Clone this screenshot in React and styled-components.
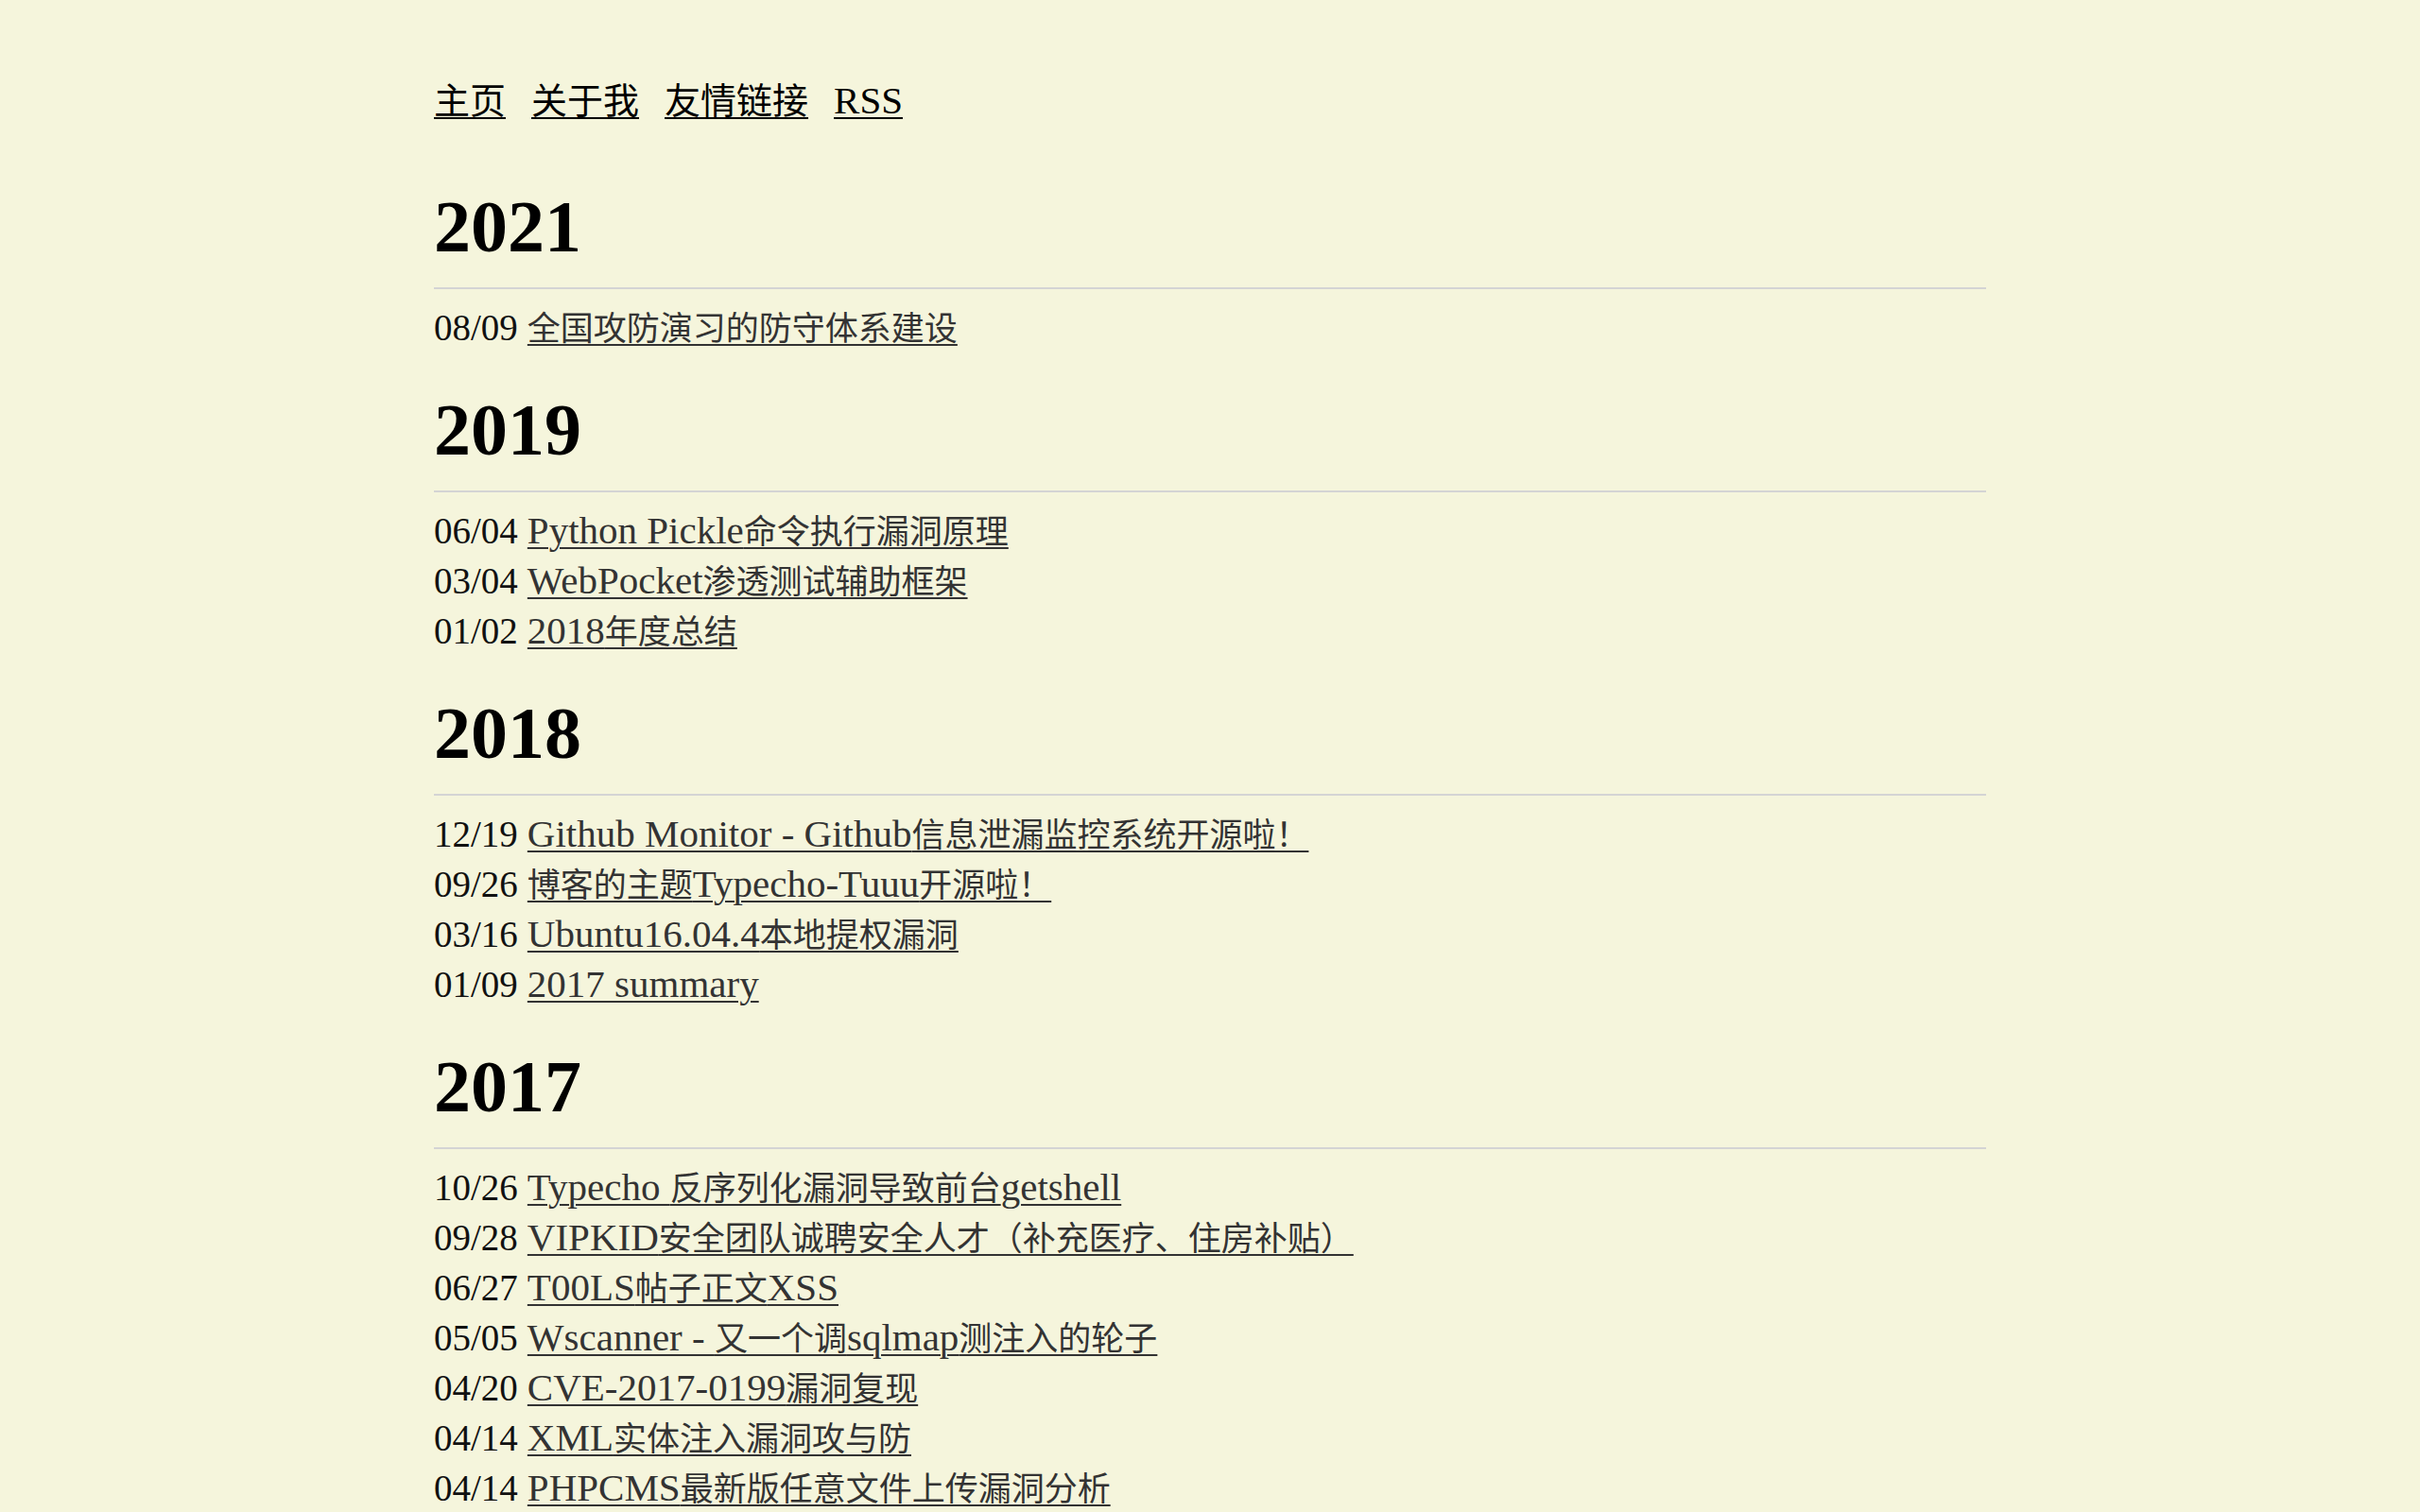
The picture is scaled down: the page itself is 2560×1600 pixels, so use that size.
import React from "react";
import styled, { createGlobalStyle } from "styled-components";

const GlobalStyle = createGlobalStyle`
  html, body {
    margin: 0;
    padding: 0;
    background: #f5f5dc;
  }
  body {
    font-family: "Liberation Serif", "Noto Sans CJK SC", serif;
    color: #111;
  }
`;

const Page = styled.div`
  width: 1642px;
  margin: 0 auto;
  padding-top: 81px;
  padding-bottom: 60px;
`;

const Nav = styled.nav`
  display: flex;
  gap: 27px;
  height: 50px;
  align-items: center;
  font-size: 41px;
`;

const NavLink = styled.a`
  color: #000;
  text-decoration: underline;
  text-underline-offset: 4px;
  text-decoration-thickness: 2px;
`;

const Archive = styled.main`
  display: flex;
  flex-direction: column;
  gap: 42px;
  margin-top: 69px;
`;

const Year = styled.h2`
  margin: 0;
  font-size: 78px;
  font-weight: 700;
  line-height: 80px;
  color: #000;
  padding-bottom: 24px;
  border-bottom: 2px solid #d4d4d4;
`;

const List = styled.ul`
  list-style: none;
  margin: 14px 0 0;
  padding: 0;
`;

const Item = styled.li`
  font-size: 41px;
  line-height: 53px;
  color: #111;
`;

const Date = styled.span`
  font-size: 39px;
  margin-right: 10px;
`;

const Link = styled.a`
  color: #333;
  text-decoration: underline;
  text-underline-offset: 4px;
  text-decoration-thickness: 2px;
`;

// CJK runs are set a little smaller than the Latin ones
const Han = styled.span`
  font-size: ${(p) => p.$size}px;
  line-height: 1;
`;

const HAN_RUN = /([\u2e80-\u9fff\u3000-\u303f\uff00-\uffef]+)/;

const Title = ({ text, size = 35 }) =>
  text.split(HAN_RUN).map((part, i) =>
    i % 2 === 1 ? (
      <Han key={i} $size={size}>
        {part}
      </Han>
    ) : (
      part
    )
  );

const navItems = ["主页", "关于我", "友情链接", "RSS"];

const archive = [
  {
    year: "2021",
    posts: [["08/09", "全国攻防演习的防守体系建设"]],
  },
  {
    year: "2019",
    posts: [
      ["06/04", "Python Pickle命令执行漏洞原理"],
      ["03/04", "WebPocket渗透测试辅助框架"],
      ["01/02", "2018年度总结"],
    ],
  },
  {
    year: "2018",
    posts: [
      ["12/19", "Github Monitor - Github信息泄漏监控系统开源啦！"],
      ["09/26", "博客的主题Typecho-Tuuu开源啦！"],
      ["03/16", "Ubuntu16.04.4本地提权漏洞"],
      ["01/09", "2017 summary"],
    ],
  },
  {
    year: "2017",
    posts: [
      ["10/26", "Typecho 反序列化漏洞导致前台getshell"],
      ["09/28", "VIPKID安全团队诚聘安全人才（补充医疗、住房补贴）"],
      ["06/27", "T00LS帖子正文XSS"],
      ["05/05", "Wscanner - 又一个调sqlmap测注入的轮子"],
      ["04/20", "CVE-2017-0199漏洞复现"],
      ["04/14", "XML实体注入漏洞攻与防"],
      ["04/14", "PHPCMS最新版任意文件上传漏洞分析"],
    ],
  },
];

export default function App() {
  return (
    <>
      <GlobalStyle />
      <Page>
        <Nav>
          {navItems.map((label) => (
            <NavLink key={label} href="#">
              <Title text={label} size={38} />
            </NavLink>
          ))}
        </Nav>
        <Archive>
          {archive.map((group) => (
            <section key={group.year}>
              <Year>{group.year}</Year>
              <List>
                {group.posts.map(([date, title], i) => (
                  <Item key={i}>
                    <Date>{date}</Date>
                    <Link href="#">
                      <Title text={title} />
                    </Link>
                  </Item>
                ))}
              </List>
            </section>
          ))}
        </Archive>
      </Page>
    </>
  );
}
